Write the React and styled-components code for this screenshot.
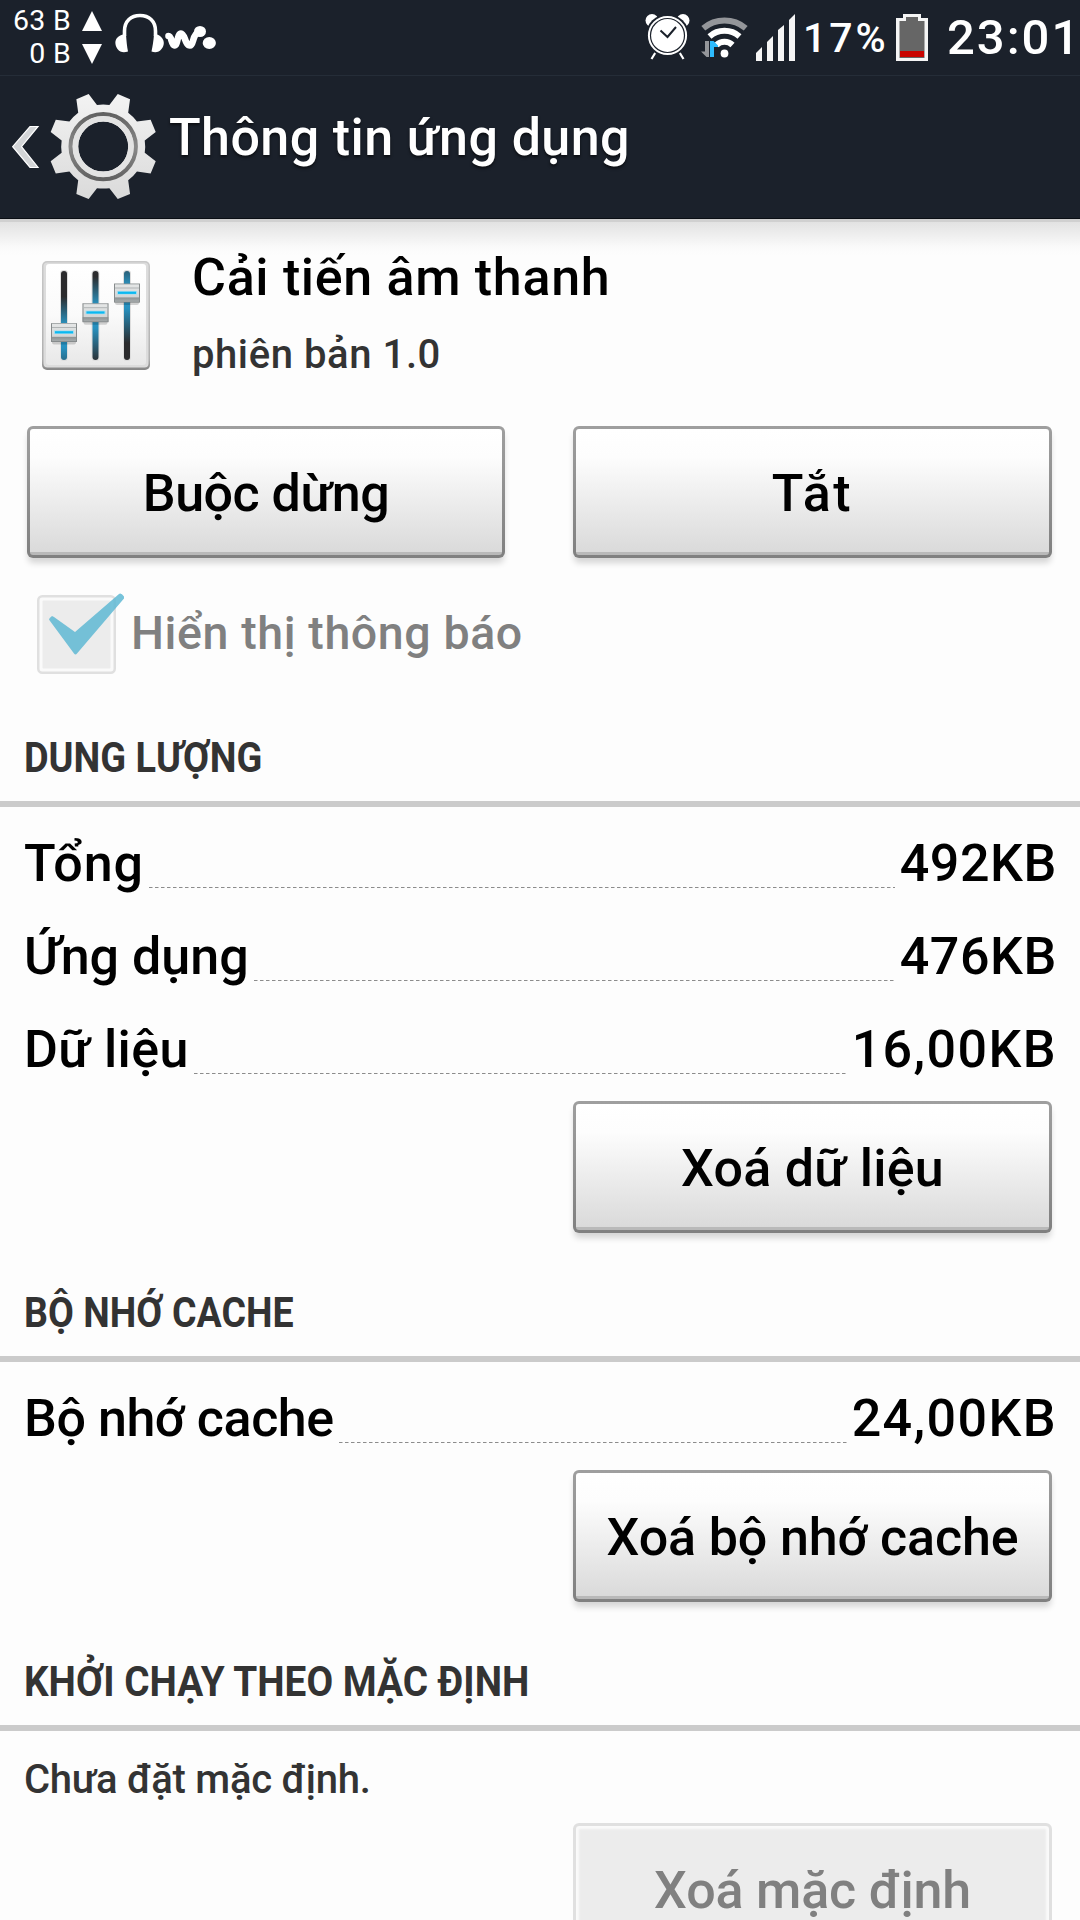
import styled, { createGlobalStyle } from "styled-components";

const GlobalStyle = createGlobalStyle`
  body {
    margin: 0;
    background: #fff;
    font-family: Roboto, "Noto Sans", sans-serif;
    font-weight: 500;
    overflow: hidden;
  }
`;

const Screen = styled.div`
  display: flex;
  flex-direction: column;
  width: 1080px;
  height: 1920px;
  overflow: hidden;
  background: #fdfdfd;
  color: #000;
`;

const StatusBar = styled.div`
  display: flex;
  justify-content: space-between;
  box-sizing: border-box;
  height: 76px;
  flex-shrink: 0;
  background: #1b212b;
  border-bottom: 1px solid #252d38;
  color: #fff;
`;

const StatusGroup = styled.div`
  display: flex;
  align-items: flex-start;
`;

const Traffic = styled.div`
  width: 71px;
  padding-top: 4px;
  text-align: right;
  font-size: 28.5px;
  line-height: 33px;
  font-weight: 400;
  letter-spacing: 0.3px;
  white-space: nowrap;
`;

const StatusText = styled.div`
  width: ${({ $width }) => $width}px;
  margin-left: ${({ $gap }) => $gap}px;
  padding-top: ${({ $top }) => $top}px;
  font-size: ${({ $size }) => $size}px;
  line-height: 50px;
  letter-spacing: ${({ $track }) => $track || 0}px;
  white-space: nowrap;
`;

const StatusIcon = styled.svg`
  display: block;
  flex-shrink: 0;
  height: 75px;
  margin-left: ${({ $gap }) => $gap || 0}px;
`;

const Header = styled.div`
  display: flex;
  align-items: flex-start;
  box-sizing: border-box;
  height: 143px;
  flex-shrink: 0;
  background: #1b212b;
  border-bottom: 1px solid #0b0f15;
  color: #fff;
`;

const HeaderIcons = styled.svg`
  display: block;
  width: 160px;
  height: 142px;
`;

const Title = styled.h1`
  margin: 30px 0 0 9px;
  font-size: 52px;
  line-height: 64px;
  font-weight: 500;
  letter-spacing: ${({ $track }) => $track}px;
  text-shadow: 0 2px 3px rgba(0, 0, 0, 0.6);
`;

const Content = styled.div`
  display: flex;
  flex-direction: column;
  flex: 1;
  background: linear-gradient(#d0d0d0 0 3px, #e2e2e2 3px, #fafafa 28px, #fdfdfd 36px);
`;

const AppInfo = styled.div`
  display: flex;
  height: 207px;
  flex-shrink: 0;
`;

const AppIcon = styled.svg`
  width: 112px;
  height: 112px;
  margin: 40px 0 0 40px;
`;

const AppText = styled.div`
  margin: 27px 0 0 40px;
`;

const AppName = styled.div`
  font-size: 52px;
  line-height: 64px;
  letter-spacing: ${({ $track }) => $track}px;
`;

const AppVersion = styled.div`
  margin-top: 21px;
  font-size: 40px;
  line-height: 48px;
  letter-spacing: ${({ $track }) => $track}px;
  color: #333;
`;

const ButtonRow = styled.div`
  display: flex;
  justify-content: flex-end;
  gap: 68px;
  padding: 0 28px 0 27px;
  margin-top: ${({ $top }) => $top || 0}px;
`;

const Button = styled.button`
  box-sizing: border-box;
  flex: 0 0 479px;
  height: 132px;
  padding: 4px 0 0;
  border: 3px solid transparent;
  border-radius: 6px;
  background:
    linear-gradient(#fff, #fdfdfd 22%, #dadada 97.6%, #b9b9b9 97.6%) padding-box,
    linear-gradient(#9f9f9f, #808080) border-box;
  box-shadow: 0 6px 6px -1px rgba(0, 0, 0, 0.16);
  font: 500 52px / 64px Roboto, "Noto Sans", sans-serif;
  letter-spacing: ${({ $track }) => $track || 0}px;
  color: #000;
  white-space: nowrap;

  &:not(:last-child) {
    flex-basis: 478px;
  }

  &:disabled {
    border-color: #e0e0e0;
    background: #ececec;
    box-shadow: inset 0 0 2px 3px #fafafa;
    color: #808080;
  }
`;

const CheckRow = styled.label`
  display: flex;
  align-items: center;
  height: 79px;
  margin: 37px 0 4px 37px;
  font-size: 46.5px;
  line-height: 77px;
  letter-spacing: ${({ $track }) => $track}px;
  color: #808080;
`;

const CheckIcon = styled.svg`
  width: 90px;
  height: 79px;
  margin-right: 4px;
  overflow: visible;
`;

const CheckText = styled.span`
  padding-bottom: 3px;
`;

const SectionTitle = styled.h2`
  flex-shrink: 0;
  margin: 37px 0 0;
  padding-left: 24px;
  border-bottom: 6px solid #cbcbcb;
  font-size: 42px;
  line-height: 86px;
  font-weight: 700;
  color: #333;
`;

// condensed caps
const Caps = styled.span`
  display: inline-block;
  transform: scaleX(${({ $stretch }) => $stretch});
  transform-origin: left;
`;

const Sizes = styled.div`
  padding: 10px 23px 0 24px;
`;

const SizeRow = styled.div`
  display: flex;
  height: 93px;
  font-size: 52px;
  line-height: 93px;
  white-space: nowrap;
`;

const SizeText = styled.span`
  letter-spacing: ${({ $track }) => $track || 0}px;
`;

const Leader = styled.span`
  flex: 1;
  height: 1px;
  margin: 70px 5px 0;
  background: repeating-linear-gradient(90deg, #8c8c8c 0 3px, transparent 4px 6px);
`;

const Note = styled.p`
  margin: 25px 0 19px 24px;
  font-size: 40px;
  line-height: 48px;
  letter-spacing: ${({ $track }) => $track}px;
  color: #333;
`;

const storage = [
  { label: "Tổng", value: "492KB", track: 1, valueTrack: 0.6 },
  { label: "Ứng dụng", value: "476KB", track: 0, valueTrack: 0.6 },
  { label: "Dữ liệu", value: "16,00KB", track: 0.4, valueTrack: 1.4 },
];

const cache = [{ label: "Bộ nhớ cache", value: "24,00KB", track: -0.45, valueTrack: 1.4 }];

const point = (radius, degrees) => {
  const angle = (degrees * Math.PI) / 180;
  return `${(radius * Math.cos(angle)).toFixed(2)} ${(radius * Math.sin(angle)).toFixed(2)}`;
};

// eight teeth, the valleys between them follow the body circle
const gearPath = () => {
  let d = "";
  for (let i = 0; i < 8; i++) {
    const a = 22.5 + i * 45;
    d += `${i ? "L" : "M"}${point(42, a - 14)}L${point(54.5, a - 7)}L${point(54.5, a + 7)}`;
    d += `L${point(42, a + 14)}A42 42 0 0 1 ${point(42, a + 31)}`;
  }
  return `${d}Z M25 0A25 25 0 1 0 -25 0A25 25 0 1 0 25 0Z`;
};

const TrafficArrows = () => (
  <StatusIcon $gap={11} width="20" viewBox="82 0 20 75" fill="#fff">
    <path d="M92 11L102 31H82Z" />
    <path d="M82 44H102L92 64Z" />
  </StatusIcon>
);

const Headset = () => (
  <StatusIcon $gap={13} width="102" viewBox="115 0 102 75" fill="#fff">
    <path
      d="M124.500 36V31C124.500 21 131 15.500 140 15.500S155.500 21 155.500 31V36"
      fill="none"
      stroke="#fff"
      strokeWidth="3.600"
    />
    <path d="M123 34.500H126C126.500 41 127 47 128 51.500C124 53 120 52.500 117.500 49C115 45.500 114.500 41 117 38C118.500 36 121 35 123 34.500Z" />
    <path d="M157 34.500H154C153.500 41 152.500 47 151.500 51.500C155 53 159 52.500 161.500 49C164.500 45.500 164.500 41 162 38C160.500 36 159 35 157 34.500Z" />
    <path
      d="M168.500 36C172 36 171 45 174.500 45.500C178 45.500 177 33.500 181 33.500C185 33.500 185 45.500 190 45.500C194 45.500 192 34 199 32"
      fill="none"
      stroke="#fff"
      strokeWidth="6.600"
      strokeLinecap="round"
      strokeLinejoin="round"
    />
    <ellipse cx="200" cy="31.500" rx="6" ry="5.600" />
    <ellipse cx="209.300" cy="43" rx="6.600" ry="6" />
  </StatusIcon>
);

const Alarm = () => (
  <StatusIcon width="46" viewBox="645 0 46 75">
    <circle cx="652" cy="20.500" r="6.500" fill="#fff" />
    <circle cx="683" cy="20.500" r="6.500" fill="#fff" />
    <path d="M657 50L651.500 59M678 50L683.500 59" stroke="#fff" strokeWidth="2.200" />
    <circle cx="667.500" cy="35.500" r="21.500" fill="#1b212b" />
    <circle cx="667.500" cy="35.500" r="18.600" fill="none" stroke="#fff" strokeWidth="2" />
    <circle cx="667.500" cy="35.500" r="16.400" fill="#fff" />
    <path d="M660.500 30.500L667.500 37L676 27" fill="none" stroke="#1b212b" strokeWidth="2" />
  </StatusIcon>
);

const Wifi = () => (
  <StatusIcon $gap={10} width="48" viewBox="701 0 48 75">
    <circle cx="724.500" cy="53.500" r="3.900" fill="#fff" />
    <g fill="none" strokeWidth="6">
      <path d="M703.300 28.200A33 33 0 0 1 745.700 28.200" stroke="#94969a" />
      <path d="M709.500 36.400A22.700 22.700 0 0 1 739.500 36.400" stroke="#fff" />
      <path d="M716.500 45A11.700 11.700 0 0 1 732.500 45" stroke="#fff" />
    </g>
    <path d="M705 41H709V57H706.500L701 51.500H705Z" fill="#94969a" />
    <path d="M710 41H713.500L718 45.500V47H714V57H710Z" fill="#2ebcff" />
  </StatusIcon>
);

const Signal = () => (
  <StatusIcon $gap={7} width="39" viewBox="756 0 39 75" fill="#f5f5f5">
    <path d="M756 53L762 47V61H756Z" />
    <path d="M767 42L773 36V61H767Z" />
    <path d="M778 30L784 25V61H778Z" />
    <path d="M789 20L795 14V61H789Z" />
  </StatusIcon>
);

const Battery = () => (
  <StatusIcon width="32" viewBox="896 0 32 75">
    <path d="M896 18H903V14H921V18H928V61H896Z" fill="#f5f5f5" />
    <path d="M899.500 21H906V17H918V21H924.500V58H899.500Z" fill="#666" />
    <path d="M900 51H924V57H900Z" fill="#c90400" />
  </StatusIcon>
);

const BackAndGear = () => (
  <HeaderIcons viewBox="0 76 160 142">
    <defs>
      <linearGradient id="gear" x1="0" y1="0" x2="0" y2="1">
        <stop offset="0" stopColor="#f3f3f3" />
        <stop offset="1" stopColor="#dadada" />
      </linearGradient>
      <linearGradient id="groove" x1="0" y1="0" x2="0" y2="1">
        <stop offset="0" stopColor="#626262" />
        <stop offset="0.5" stopColor="#8a8a8a" />
        <stop offset="1" stopColor="#626262" />
      </linearGradient>
    </defs>
    <path
      d="M12.700 146.700L30 126.500H38L21.500 146.700L38 167.500H30Z"
      fill="#d3d5d7"
      stroke="#fff"
      strokeWidth="1.200"
    />
    <g transform="translate(103.200 146.600)">
      <path d={gearPath()} fill="url(#gear)" fillRule="evenodd" />
      <circle r="32.700" fill="none" stroke="url(#groove)" strokeWidth="4" />
      <circle r="27.700" fill="none" stroke="#e3e3e3" strokeWidth="5.400" />
    </g>
  </HeaderIcons>
);

const sliders = [
  { x: 64, knob: 332.5 },
  { x: 95.5, knob: 312.7 },
  { x: 127, knob: 293 },
];

const Equalizer = () => (
  <AppIcon viewBox="40 259 112 112">
    <defs>
      <linearGradient id="frame" x1="0" y1="0" x2="0" y2="1">
        <stop offset="0" stopColor="#c9c9c9" />
        <stop offset="0.900" stopColor="#b0b0b0" />
        <stop offset="1" stopColor="#858585" />
      </linearGradient>
      <linearGradient id="plate" x1="0" y1="0" x2="0" y2="1">
        <stop offset="0" stopColor="#fff" />
        <stop offset="0.500" stopColor="#fafafa" />
        <stop offset="1" stopColor="#e8e8e8" />
      </linearGradient>
      <linearGradient id="knob" x1="0" y1="0" x2="0" y2="1">
        <stop offset="0" stopColor="#8c9192" />
        <stop offset="0.080" stopColor="#e4e6e6" />
        <stop offset="0.700" stopColor="#d2d5d6" />
        <stop offset="0.760" stopColor="#8f9596" />
        <stop offset="0.940" stopColor="#a5aaab" />
        <stop offset="1" stopColor="#6f7475" />
      </linearGradient>
      {sliders.map(({ x, knob }) => (
        <linearGradient
          key={x}
          id={`track${x}`}
          gradientUnits="userSpaceOnUse"
          x1="0"
          y1={knob - 36}
          x2="0"
          y2={knob + 50}
        >
          <stop offset="0" stopColor="#2b2b2d" />
          <stop offset="0.350" stopColor="#2b9bcb" />
          <stop offset="0.600" stopColor="#2790be" />
          <stop offset="1" stopColor="#2b2b2d" />
        </linearGradient>
      ))}
    </defs>
    <rect x="42" y="261" width="108" height="109" rx="5" fill="url(#frame)" />
    <rect x="43.500" y="262.500" width="105" height="105" rx="4" fill="#dcdcdc" />
    <rect x="46" y="264" width="100" height="101" rx="3" fill="url(#plate)" />
    {sliders.map(({ x, knob }) => (
      <g key={x}>
        <rect x={x - 4} y="270" width="8" height="91" rx="3.500" fill="#ddd" />
        <rect x={x - 3} y="271" width="6" height="89" rx="3" fill={`url(#track${x})`} />
        <rect x={x - 12} y={knob - 7} width="24" height="19" rx="2" fill="#000" opacity="0.160" />
        <rect x={x - 13} y={knob - 9.500} width="26" height="19" fill="url(#knob)" />
        <path d={`M${x - 12.500} ${knob - 9}v18M${x + 12.500} ${knob - 9}v18`} stroke="#868b8c" />
        <path d={`M${x - 12} ${knob - 5}h24`} stroke="#b0b4b5" />
        <rect x={x - 10} y={knob - 2} width="20" height="3.500" fill="#9fdcf0" />
        <rect x={x - 9} y={knob - 1.300} width="18" height="2.200" fill="#0cb8f0" />
      </g>
    ))}
  </AppIcon>
);

const CheckMark = () => (
  <CheckIcon viewBox="37 595 90 79">
    <rect x="38.250" y="596.250" width="76.500" height="76.500" rx="4" fill="#fafafa" stroke="#e0e0e0" strokeWidth="2.500" />
    <rect x="42.500" y="600.500" width="68" height="68" rx="1" fill="#ececec" />
    <path
      d="M49 619.500Q49 618 52 616L54 617L75 632L119 594Q121 592.500 124 596.500V598.500L77 653.500Q75.500 655.500 74 653.500L50 621Z"
      fill="#5fb9d3"
      fillOpacity="0.850"
    />
  </CheckIcon>
);

const SizeList = ({ items }) => (
  <Sizes>
    {items.map(({ label, value, track, valueTrack }) => (
      <SizeRow key={label}>
        <SizeText $track={track}>{label}</SizeText>
        <Leader />
        <SizeText $track={valueTrack}>{value}</SizeText>
      </SizeRow>
    ))}
  </Sizes>
);

export default function App() {
  return (
    <Screen>
      <GlobalStyle />
      <StatusBar>
        <StatusGroup>
          <Traffic>
            63 B<br />0 B
          </Traffic>
          <TrafficArrows />
          <Headset />
        </StatusGroup>
        <StatusGroup>
          <Alarm />
          <Wifi />
          <Signal />
          <StatusText $size={41} $width={93} $gap={8} $top={13} $track={3}>
            17%
          </StatusText>
          <Battery />
          <StatusText $size={49} $width={133} $gap={19} $top={13} $track={2}>
            23:01
          </StatusText>
        </StatusGroup>
      </StatusBar>
      <Header>
        <BackAndGear />
        <Title $track={0.4}>Thông tin ứng dụng</Title>
      </Header>
      <Content>
        <AppInfo>
          <Equalizer />
          <AppText>
            <AppName $track={0.68}>Cải tiến âm thanh</AppName>
            <AppVersion $track={0.58}>phiên bản 1.0</AppVersion>
          </AppText>
        </AppInfo>
        <ButtonRow>
          <Button $track={-0.5}>Buộc dừng</Button>
          <Button $track={2.6}>Tắt</Button>
        </ButtonRow>
        <CheckRow $track={0.6}>
          <CheckMark />
          <CheckText>Hiển thị thông báo</CheckText>
        </CheckRow>
        <SectionTitle>
          <Caps $stretch={0.902}>DUNG LƯỢNG</Caps>
        </SectionTitle>
        <SizeList items={storage} />
        <ButtonRow $top={5}>
          <Button $track={0.25}>Xoá dữ liệu</Button>
        </ButtonRow>
        <SectionTitle>
          <Caps $stretch={0.894}>BỘ NHỚ CACHE</Caps>
        </SectionTitle>
        <SizeList items={cache} />
        <ButtonRow $top={5}>
          <Button $track={-0.15}>Xoá bộ nhớ cache</Button>
        </ButtonRow>
        <SectionTitle>
          <Caps $stretch={0.922}>KHỞI CHẠY THEO MẶC ĐỊNH</Caps>
        </SectionTitle>
        <Note $track={-0.27}>Chưa đặt mặc định.</Note>
        <ButtonRow>
          <Button disabled $track={-0.2}>
            Xoá mặc định
          </Button>
        </ButtonRow>
      </Content>
    </Screen>
  );
}
